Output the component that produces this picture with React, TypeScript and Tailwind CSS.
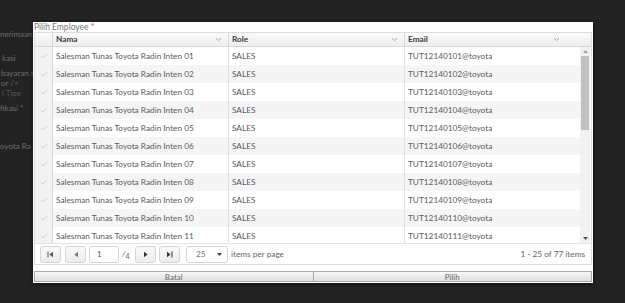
import React from "react";

const rows = Array.from({ length: 11 }, (_, i) => {
  const n = String(i + 1).padStart(2, "0");
  return { nama: `Salesman Tunas Toyota Radin Inten ${n}`, role: "SALES", email: `TUT121401${n}@toyota` };
});

function Chevron() {
  return (
    <svg width="7" height="5" viewBox="0 0 7 5" className="shrink-0">
      <path d="M1 1.2 L3.5 3.6 L6 1.2" fill="none" stroke="#9a9a9a" strokeWidth="0.9" />
    </svg>
  );
}

function Check() {
  return (
    <svg width="8" height="6" viewBox="0 0 8 6">
      <path d="M1 3 L3 5 L7 1" fill="none" stroke="#d0d0d0" strokeWidth="0.9" />
    </svg>
  );
}

function PagerBtn({ children }: { children: React.ReactNode }) {
  return (
    <div className="w-[21px] h-[17px] flex items-center justify-center border border-[#d5d5d5] rounded-[3px] bg-gradient-to-b from-[#fafafa] to-[#ececec]">
      {children}
    </div>
  );
}

export default function App() {
  return (
    <div className="relative w-[625px] h-[303px] bg-[#232323] overflow-hidden font-['Lato','Open_Sans',sans-serif] text-[8.25px]">
      {/* page behind the dialog */}
      <div className="flex flex-col text-[#6b6b6b] text-[8px] leading-[10px]">
        <div className="mt-[29px] whitespace-nowrap">nerimaan</div>
        <div className="mt-[14px] ml-[2px] whitespace-nowrap">kasi</div>
        <div className="mt-[5px] ml-[1px] whitespace-nowrap">bayaran s</div>
        <div className="ml-[1px] whitespace-nowrap">or /&gt;</div>
        <div className="ml-[2px] whitespace-nowrap text-[#555]">l Tipe</div>
        <div className="mt-[5px] whitespace-nowrap">fikasi *</div>
        <div className="mt-[28px] whitespace-nowrap">oyota Ra</div>
      </div>

      {/* dialog */}
      <div className="absolute left-[33px] top-[22px] w-[560px] h-[261px] bg-white shadow-[0_1px_4px_rgba(0,0,0,0.6)] flex flex-col">
        <div className="h-[10px] pl-[1px] leading-[10px] text-[8.5px] text-[#777]">
          Pilih Employee <span className="text-[#e04040]">*</span>
        </div>

        <div className="mx-[1px] border border-[#dcdcdc] flex flex-col">
          {/* header */}
          <div className="grid grid-cols-[18px_176px_176px_1fr] h-[14px] bg-gradient-to-b from-[#fafafa] to-[#eeeeee] border-b border-[#d6d6d6] text-[#3a3a3a] font-bold">
            <div className="border-r border-[#d6d6d6]" />
            <div className="flex items-center justify-between pl-[3px] pr-[6px] border-r border-[#d6d6d6]">
              <span>Nama</span>
              <Chevron />
            </div>
            <div className="flex items-center justify-between pl-[3px] pr-[6px] border-r border-[#d6d6d6]">
              <span>Role</span>
              <Chevron />
            </div>
            <div className="flex items-center justify-between pl-[3px] pr-[31px]">
              <span>Email</span>
              <Chevron />
            </div>
          </div>

          {/* body */}
          <div className="flex h-[196px] overflow-hidden">
            <div className="flex-1 flex flex-col text-[#5a5a5a]">
              {rows.map((r, i) => (
                <div
                  key={r.nama}
                  className={`grid grid-cols-[18px_176px_176px_1fr] h-[18px] shrink-0 ${i % 2 ? "bg-[#f5f5f5]" : "bg-white"}`}
                >
                  <div className="flex items-center justify-center bg-[#f2f2f2] border-r border-[#d6d6d6]">
                    <Check />
                  </div>
                  <div className="flex items-center pl-[3px] border-r border-[#e2e2e2] whitespace-nowrap">{r.nama}</div>
                  <div className="flex items-center pl-[3px] border-r border-[#e2e2e2]">{r.role}</div>
                  <div className="flex items-center pl-[3px]">{r.email}</div>
                </div>
              ))}
            </div>
            <div className="w-[10px] mr-[1px] flex flex-col bg-[#f1f1f1]">
              <div className="h-[9px] flex items-center justify-center">
                <svg width="5" height="3" viewBox="0 0 5 3"><path d="M0 3 L2.5 0 L5 3Z" fill="#a0a0a0" /></svg>
              </div>
              <div className="mx-[1px] h-[74px] bg-[#c1c1c1]" />
              <div className="flex-1" />
              <div className="h-[9px] flex items-center justify-center">
                <svg width="5" height="3" viewBox="0 0 5 3"><path d="M0 0 L5 0 L2.5 3Z" fill="#505050" /></svg>
              </div>
            </div>
          </div>

          {/* pager */}
          <div className="h-[21px] flex items-center pl-[5px] pr-[6px] border-t border-[#e4e4e4] text-[#666]">
            <div className="flex items-center gap-[3px]">
              <PagerBtn>
                <svg width="7" height="7" viewBox="0 0 7 7"><path d="M1 0.5 V6.5" stroke="#555" strokeWidth="1" /><path d="M6 0.8 L2.4 3.5 L6 6.2Z" fill="#555" /></svg>
              </PagerBtn>
              <div className="ml-[1px]">
                <PagerBtn>
                  <svg width="6" height="7" viewBox="0 0 6 7"><path d="M5 0.8 L1.4 3.5 L5 6.2Z" fill="#777" /></svg>
                </PagerBtn>
              </div>
              <div className="w-[30px] h-[17px] border border-[#d5d5d5] rounded-[3px] bg-white flex items-center pl-[7px] text-[#555]">1</div>
              <span className="w-[10px] text-[#666] italic">/<span className="not-italic text-[7px] relative top-[2px]">4</span></span>
              <PagerBtn>
                <svg width="6" height="7" viewBox="0 0 6 7"><path d="M1 0.8 L4.6 3.5 L1 6.2Z" fill="#333" /></svg>
              </PagerBtn>
              <PagerBtn>
                <svg width="7" height="7" viewBox="0 0 7 7"><path d="M1 0.8 L4.6 3.5 L1 6.2Z" fill="#333" /><path d="M6 0.5 V6.5" stroke="#333" strokeWidth="1" /></svg>
              </PagerBtn>
              <div className="ml-[3px] w-[42px] h-[17px] border border-[#d5d5d5] rounded-[3px] bg-white flex items-center justify-between pl-[9px] pr-[5px] text-[#777]">
                <span>25</span>
                <svg width="5" height="3" viewBox="0 0 5 3"><path d="M0 0 L5 0 L2.5 3Z" fill="#444" /></svg>
              </div>
              <span>items per page</span>
            </div>
            <div className="ml-auto">1 - 25 of 77 items</div>
          </div>
        </div>

        <div className="flex-1" />

        {/* buttons */}
        <div className="flex h-[11px] mb-[1px] mx-[1px] text-[#666] text-[8px]">
          <div className="flex-1 flex items-center justify-center border border-[#a9a9a9] bg-gradient-to-b from-[#f8f8f8] to-[#dedede]">Batal</div>
          <div className="flex-1 flex items-center justify-center border border-l-0 border-[#a9a9a9] bg-gradient-to-b from-[#f8f8f8] to-[#dedede]">Pilih</div>
        </div>
      </div>
    </div>
  );
}
